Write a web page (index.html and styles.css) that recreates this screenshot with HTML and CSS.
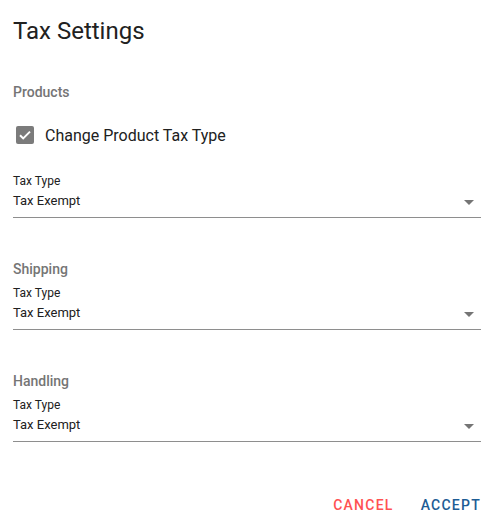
FILE: index.html
```html
<!DOCTYPE html>
<html>
<head>
<meta charset="utf-8">
<link rel="stylesheet" href="styles.css">
</head>
<body>
<div class="dialog">
  <h1 class="title">Tax Settings</h1>
  <div class="section">
    <div class="section-title">Products</div>
    <label class="checkbox-row">
      <span class="checkbox">
        <svg viewBox="0 0 18 18" width="18" height="18"><path d="M4 9.2l3.2 3.2L14 5.6" fill="none" stroke="#fff" stroke-width="2"/></svg>
      </span>
      <span class="checkbox-label">Change Product Tax Type</span>
    </label>
    <div class="field">
      <div class="field-label">Tax Type</div>
      <div class="select"><span class="value">Tax Exempt</span><span class="arrow"></span></div>
    </div>
  </div>
  <div class="section">
    <div class="section-title">Shipping</div>
    <div class="field tight">
      <div class="field-label">Tax Type</div>
      <div class="select"><span class="value">Tax Exempt</span><span class="arrow"></span></div>
    </div>
  </div>
  <div class="section">
    <div class="section-title">Handling</div>
    <div class="field tight">
      <div class="field-label">Tax Type</div>
      <div class="select"><span class="value">Tax Exempt</span><span class="arrow"></span></div>
    </div>
  </div>
  <div class="actions">
    <button class="btn cancel">CANCEL</button>
    <button class="btn accept">ACCEPT</button>
  </div>
</div>
</body>
</html>
```

FILE: styles.css
```css
html, body {
  margin: 0;
  padding: 0;
  background: #fff;
}
body {
  font-family: Roboto, "Liberation Sans", sans-serif;
  color: #212121;
}
.dialog {
  width: 495px;
  padding: 15px 14px 0 13px;
  box-sizing: border-box;
}
.title {
  margin: 0;
  font-size: 24px;
  font-weight: 400;
  line-height: 32px;
  color: #212121;
}
.section {
  display: flex;
  flex-direction: column;
}
.section-title {
  font-size: 14px;
  font-weight: 500;
  color: #757575;
  line-height: 20px;
}
.section:first-of-type .section-title {
  margin-top: 35px;
}
.checkbox-row {
  display: flex;
  align-items: center;
  gap: 11px;
  margin-top: 21px;
  padding-left: 3px;
  height: 24px;
}
.checkbox {
  width: 18px;
  height: 18px;
  border-radius: 2px;
  background: #7b7b7b;
  display: flex;
}
.checkbox-label {
  font-size: 16px;
  color: #212121;
}
.field {
  margin-top: 24px;
}
.field.tight {
  margin-top: 4px;
}
.field-label {
  font-size: 12px;
  line-height: 20px;
  color: #212121;
}
.select {
  display: flex;
  justify-content: space-between;
  padding-top: 1px;
  padding-bottom: 7px;
  border-bottom: 1px solid #8e8e8e;
}
.value {
  font-size: 13px;
  color: #212121;
  line-height: 18px;
}
.arrow {
  align-self: flex-end;
  width: 0;
  height: 0;
  border-left: 5px solid transparent;
  border-right: 5px solid transparent;
  border-top: 5px solid #757575;
  margin-right: 7px;
  margin-bottom: 5px;
}
.section + .section {
  margin-top: 41px;
}
.actions {
  display: flex;
  justify-content: flex-end;
  gap: 27px;
  margin-top: 53px;
}
.btn {
  background: none;
  border: none;
  padding: 0;
  font-family: Roboto, "Liberation Sans", sans-serif;
  font-size: 14px;
  font-weight: 500;
  letter-spacing: 1.25px;
  line-height: 20px;
}
.cancel { color: #ff5252; }
.accept { color: #1d5c95; }
```
